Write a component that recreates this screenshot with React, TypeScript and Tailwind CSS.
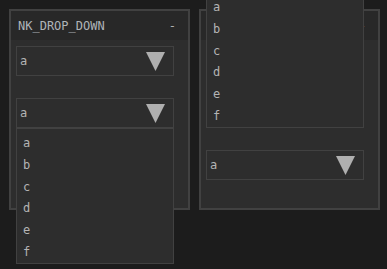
import React from "react";

const font = { fontFamily: '"DejaVu Sans Mono", "Liberation Mono", monospace' };

function Triangle() {
  return (
    <svg width="19" height="19" viewBox="0 0 19 19" className="block">
      <polygon points="0,0 19,0 9.5,19" fill="#afafaf" />
    </svg>
  );
}

function Combo() {
  return (
    <div className="w-[158px] h-[30px] border border-[#414141] bg-[#2d2d2d] flex items-center justify-between pl-[3px] pr-[8px]">
      <span className="text-[12px] leading-none text-[#b4b4b4]">a</span>
      <Triangle />
    </div>
  );
}

function Popup({ className }: { className: string }) {
  const items = ["a", "b", "c", "d", "e", "f"];
  return (
    <div className={`absolute w-[158px] h-[136px] border border-[#414141] bg-[#2d2d2d] z-10 pt-[3px] pl-[6px] flex flex-col ${className}`}>
      {items.map((it) => (
        <div key={it} className="h-[22px] flex items-center text-[12px] leading-none text-[#b4b4b4]">
          {it}
        </div>
      ))}
    </div>
  );
}

function Header({ title }: { title: string }) {
  return (
    <div className="h-[29px] bg-[#282828] flex items-center justify-between pl-[7px] pr-[12px] shrink-0">
      <span className="text-[12px] leading-none text-[#afb4b8]">{title}</span>
      <span className="text-[12px] leading-none text-[#afafaf]">-</span>
    </div>
  );
}

export default function App() {
  return (
    <div
      className="relative w-[387px] h-[269px] bg-[#1c1c1c] overflow-hidden flex gap-[9px] pl-[9px] pt-[9px] items-start"
      style={font}
    >
      <div className="relative w-[181px] h-[201px] border-2 border-[#414141] bg-[#2d2d2d] flex flex-col">
        <Header title="NK_DROP_DOWN" />
        <div className="pt-[6px] pl-[5px] flex flex-col gap-[22px]">
          <Combo />
          <div className="relative">
            <Combo />
            <Popup className="top-[30px] left-0" />
          </div>
        </div>
      </div>
      <div className="relative w-[181px] h-[201px] border-2 border-[#414141] bg-[#2d2d2d] flex flex-col">
        <Header title="" />
        <div className="pt-[110px] pl-[5px] flex flex-col">
          <Combo />
        </div>
        <Popup className="top-[-19px] left-[5px]" />
      </div>
    </div>
  );
}
